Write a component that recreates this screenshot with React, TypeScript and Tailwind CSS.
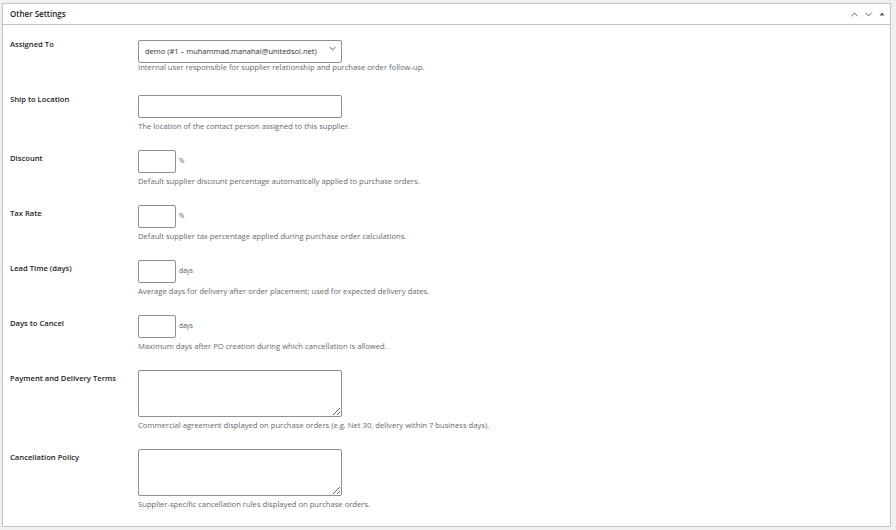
import { ChevronDown, ChevronUp } from "lucide-react";

type Field = {
  label: string;
  help: string;
  kind: "select" | "text" | "small" | "textarea";
  suffix?: string;
};

const FIELDS: Field[] = [
  {
    label: "Assigned To",
    kind: "select",
    help: "Internal user responsible for supplier relationship and purchase order follow-up.",
  },
  {
    label: "Ship to Location",
    kind: "text",
    help: "The location of the contact person assigned to this supplier.",
  },
  {
    label: "Discount",
    kind: "small",
    suffix: "%",
    help: "Default supplier discount percentage automatically applied to purchase orders.",
  },
  {
    label: "Tax Rate",
    kind: "small",
    suffix: "%",
    help: "Default supplier tax percentage applied during purchase order calculations.",
  },
  {
    label: "Lead Time (days)",
    kind: "small",
    suffix: "days",
    help: "Average days for delivery after order placement; used for expected delivery dates.",
  },
  {
    label: "Days to Cancel",
    kind: "small",
    suffix: "days",
    help: "Maximum days after PO creation during which cancellation is allowed.",
  },
  {
    label: "Payment and Delivery Terms",
    kind: "textarea",
    help: "Commercial agreement displayed on purchase orders (e.g. Net 30, delivery within 7 business days).",
  },
  {
    label: "Cancellation Policy",
    kind: "textarea",
    help: "Supplier-specific cancellation rules displayed on purchase orders.",
  },
];

const inputBase =
  "border border-[#8c8f94] rounded-[2px] bg-white outline-none text-[7.5px] text-[#2c3338]";

function Control({ field }: { field: Field }) {
  if (field.kind === "select") {
    return (
      <div className="relative w-[204px] h-[23px]">
        <select
          className={`${inputBase} appearance-none w-full h-full pl-[6px] pr-[14px]`}
          defaultValue="1"
        >
          <option value="1">demo (#1 – muhammad.manahal@unitedsol.net)</option>
        </select>
        <svg
          className="absolute right-[6px] top-[10px] pointer-events-none"
          width="7"
          height="5"
          viewBox="0 0 7 5"
        >
          <path d="M0.5 1.2l3 2.5 3-2.5" fill="none" stroke="#50575e" strokeWidth="1" />
        </svg>
      </div>
    );
  }
  if (field.kind === "text") {
    return <input type="text" className={`${inputBase} w-[204px] h-[23px] px-[6px]`} />;
  }
  if (field.kind === "small") {
    return (
      <div className="flex items-center gap-[3px]">
        <input type="text" className={`${inputBase} w-[38px] h-[23px] px-[4px]`} />
        <span className="text-[6.5px] text-[#50575e]">{field.suffix}</span>
      </div>
    );
  }
  return <textarea className={`${inputBase} block w-[204px] h-[47px] px-[4px] py-[2px]`} />;
}

export default function App() {
  return (
    <div
      className="w-[896px] h-[530px] bg-[#f0f0f1] pt-[3px] pl-[2px]"
      style={{ fontFamily: '"Open Sans", "Noto Sans", sans-serif' }}
    >
      <div className="w-[889px] h-[524px] border border-[#c3c4c7] bg-white">
        <div className="h-[21px] border-b border-[#c3c4c7] flex items-center justify-between pl-[7px] pr-[3px]">
          <h2 className="text-[8px] font-semibold text-[#1d2327]">Other Settings</h2>
          <div className="flex items-center gap-[3px] text-[#50575e]">
            <ChevronUp size={11} strokeWidth={2} />
            <ChevronDown size={11} strokeWidth={2} />
            <svg width="10" height="10" viewBox="0 0 10 10">
              <path d="M2.5 6.5h5L5 3.5z" fill="#50575e" />
            </svg>
          </div>
        </div>

        <div className="pl-[7px]">
          {FIELDS.map((field) => (
            <div key={field.label} className="grid grid-cols-[128px_1fr] pt-[11px] pb-[7px]">
              <div className="pt-[2px] text-[7.65px] leading-[12px] font-semibold text-[#1d2327]">
                {field.label}
              </div>
              <div>
                <Control field={field} />
                <p className="mt-[2px] text-[7.65px] leading-[12px] text-[#646970]">{field.help}</p>
              </div>
            </div>
          ))}
        </div>
      </div>
    </div>
  );
}
